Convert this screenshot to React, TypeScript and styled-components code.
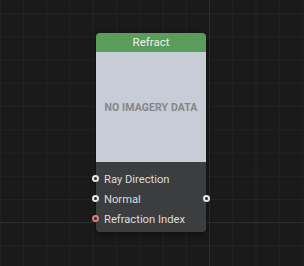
import React from "react";
import styled, { createGlobalStyle } from "styled-components";

const Global = createGlobalStyle`
  html, body { margin: 0; padding: 0; background: #1a1a1a; }
  body { font-family: Roboto, "Liberation Sans", sans-serif; }
`;

const Canvas = styled.div`
  position: relative;
  width: 304px;
  height: 266px;
  overflow: hidden;
  background-color: #1a1a1a;
  background-image:
    linear-gradient(to right, #2c2c2c 1px, transparent 1px),
    linear-gradient(to bottom, #2c2c2c 1px, transparent 1px),
    linear-gradient(to right, #222222 1px, transparent 1px),
    linear-gradient(to bottom, #222222 1px, transparent 1px);
  background-size: 232.5px 232.5px, 232.5px 232.5px, 23.25px 23.25px, 23.25px 23.25px;
  background-position: 209px 0, 0 222px, 23px 0, 0 13px;
`;

const Node = styled.div`
  position: absolute;
  left: 96px;
  top: 33px;
  width: 110px;
  display: flex;
  flex-direction: column;
  border-radius: 4px;
  box-shadow: 0 2px 6px rgba(0, 0, 0, 0.45);
`;

const Header = styled.div`
  height: 19px;
  background: #5a9c5a;
  border-radius: 4px 4px 0 0;
  color: #eef3ee;
  font-size: 11.5px;
  line-height: 19px;
  text-align: center;
`;

const Preview = styled.div`
  height: 110px;
  background: #c7ccd6;
  display: flex;
  align-items: center;
  justify-content: center;
  color: #84868a;
  font-weight: 700;
  font-size: 10.5px;
  letter-spacing: 0.1px;
  padding-top: 1px;
  box-sizing: border-box;
`;

const Body = styled.div`
  background: #3c3d3f;
  border-radius: 0 0 4px 4px;
  padding: 7px 0 3px;
  display: flex;
  flex-direction: column;
`;

const Row = styled.div`
  position: relative;
  height: 20px;
  display: flex;
  align-items: center;
  padding-left: 8px;
  color: #dcdcdc;
  font-size: 11.2px;
`;

const Socket = styled.span<{ $color: string; $side: "left" | "right" }>`
  position: absolute;
  ${(p) => (p.$side === "left" ? "left: -4px;" : "right: -4px;")}
  top: 50%;
  width: 7px;
  height: 7px;
  margin-top: -4px;
  border-radius: 50%;
  box-sizing: border-box;
  background: #2a2a2a;
  border: 2px solid ${(p) => p.$color};
`;

const rows = [
  { label: "Ray Direction", color: "#e6e6e6", out: false },
  { label: "Normal", color: "#e6e6e6", out: true },
  { label: "Refraction Index", color: "#e07c7c", out: false },
];

export default function App() {
  return (
    <>
      <Global />
      <Canvas>
        <Node>
          <Header>Refract</Header>
          <Preview>NO IMAGERY DATA</Preview>
          <Body>
            {rows.map((r) => (
              <Row key={r.label}>
                <Socket $color={r.color} $side="left" />
                {r.label}
                {r.out && <Socket $color="#e6e6e6" $side="right" />}
              </Row>
            ))}
          </Body>
        </Node>
      </Canvas>
    </>
  );
}
